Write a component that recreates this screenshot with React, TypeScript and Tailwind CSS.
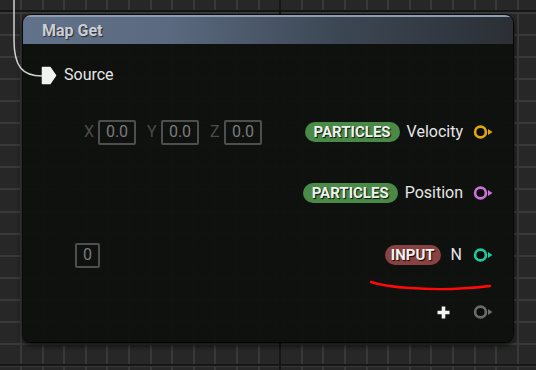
import React from 'react';

interface PinProps {
  color: string;
}

// output pin: ring + small arrow
const Pin: React.FC<PinProps> = ({ color }) => (
  <svg width="22" height="16" viewBox="0 0 22 16" className="shrink-0">
    <circle cx="7.5" cy="8" r="5.4" fill="#0b0c0b" stroke={color} strokeWidth="2.7" />
    <path d="M15 5 L19.5 8 L15 11 Z" fill={color} />
  </svg>
);

const Badge: React.FC<{ label: string; tone: 'green' | 'red' }> = ({ label, tone }) => (
  <span
    className={`h-[20px] rounded-full flex items-center text-[15px] font-bold text-[#eef2ee] [text-shadow:1px_1px_1px_rgba(0,0,0,0.9)] ${
      tone === 'green' ? 'px-[9px] bg-[#4a8a47]' : 'px-[6px] bg-[#8a4141]'
    }`}
  >
    {label}
  </span>
);

const VecField: React.FC<{ axis: string }> = ({ axis }) => (
  <div className="flex items-center">
    <span className="w-[14px] text-[#4b4b4b] text-[16px]">{axis}</span>
    <span className="w-[38px] h-[25px] border-2 border-[#4e4e4e] rounded-[2px] flex items-center justify-center text-[16px] text-[#7c7c7c]">
      0.0
    </span>
  </div>
);

// background grid of the graph canvas
const cols = Array.from({ length: 25 }, (_, i) => Math.round(20 + i * 21.6));
const rows = Array.from({ length: 17 }, (_, i) => Math.round(12 + i * 22.06));

const Grid = () => (
  <div className="absolute inset-0">
    <svg width="536" height="370" shapeRendering="crispEdges">
      {cols.map((x) => (
        <rect key={'c' + x} x={x} y="0" width="1.5" height="370" fill="#393939" />
      ))}
      {rows.map((y) => (
        <rect key={'r' + y} x="0" y={y} width="536" height="1.5" fill="#393939" />
      ))}
      <rect x="279" y="0" width="2" height="370" fill="#161616" />
      <rect x="0" y="10" width="536" height="2" fill="#161616" />
      <rect x="0" y="364" width="536" height="2" fill="#161616" />
    </svg>
  </div>
);

export default function App() {
  return (
    <div className="relative w-[536px] h-[370px] overflow-hidden bg-[#272727] font-['Roboto','Liberation_Sans',sans-serif]">
      <Grid />
      <div className="relative pt-[15px] pl-[23px]">
        {/* Map Get node */}
        <div className="w-[490px] h-[327px] rounded-[8px] overflow-hidden flex flex-col bg-[#0e100e]/[0.95] shadow-[0_3px_6px_rgba(0,0,0,0.8)] ring-1 ring-black/70">
          <div className="h-[29px] shrink-0 flex items-center pl-[19px] border-t-2 border-[#8d9db2] bg-[linear-gradient(to_right,#62728a_0%,#5a697f_30%,#3c4653_65%,#2b2f35_100%)]">
            <span className="text-[16px] font-bold text-[#c9ced6] [text-shadow:1px_1px_1px_rgba(0,0,0,0.6)]">
              Map Get
            </span>
          </div>

          <div className="flex flex-col pl-[18px] pr-[18px]">
            {/* Source */}
            <div className="mt-[18px] h-[26px] flex items-center">
              <svg width="16" height="19" viewBox="0 0 16 19" className="shrink-0">
                <path d="M1.5 1.5 H9 L14.5 9.5 L9 17.5 H1.5 Z" fill="#f2f2f2" stroke="#f2f2f2" strokeWidth="1.5" strokeLinejoin="round" />
              </svg>
              <span className="ml-[7px] text-[16px] text-[#e6e6e6]">Source</span>
            </div>

            {/* Velocity */}
            <div className="mt-[31px] h-[26px] flex items-center">
              <div className="ml-[43px] flex items-center gap-[11px]">
                <VecField axis="X" />
                <VecField axis="Y" />
                <VecField axis="Z" />
              </div>
              <div className="ml-auto flex items-center">
                <Badge label="PARTICLES" tone="green" />
                <span className="ml-[7px] mr-[10px] text-[16px] text-[#e6e6e6]">Velocity</span>
                <Pin color="#dea511" />
              </div>
            </div>

            {/* Position */}
            <div className="mt-[35px] h-[26px] flex items-center justify-end">
              <Badge label="PARTICLES" tone="green" />
              <span className="ml-[7px] mr-[10px] text-[16px] text-[#e6e6e6]">Position</span>
              <Pin color="#c873d6" />
            </div>

            {/* N */}
            <div className="mt-[36px] h-[26px] flex items-center">
              <span className="ml-[34px] w-[25px] h-[25px] border-2 border-[#4e4e4e] rounded-[2px] flex items-center justify-center text-[16px] text-[#7c7c7c]">
                0
              </span>
              <div className="ml-auto flex items-center">
                <Badge label="INPUT" tone="red" />
                <span className="ml-[10px] mr-[11px] text-[16px] text-[#e6e6e6]">N</span>
                <Pin color="#1fc9a0" />
              </div>
            </div>

            {/* add pin */}
            <div className="mt-[31px] h-[26px] flex items-center justify-end">
              <svg width="15" height="15" viewBox="0 0 15 15" className="mr-[22px]">
                <path d="M7.5 1.5 V13.5 M1.5 7.5 H13.5" stroke="#f4f4f4" strokeWidth="3.6" />
              </svg>
              <Pin color="#6b6b6b" />
            </div>
          </div>
        </div>
      </div>

      {/* incoming wire + red annotation */}
      <svg className="absolute left-0 top-0 pointer-events-none" width="536" height="370">
        <path d="M14 0 L14 40 C14 66 22 76 42 76" fill="none" stroke="#cfcfcf" strokeWidth="1.5" />
        <path d="M371 282 C380 285 392 287 410 288 C435 290 465 289 490 286" fill="none" stroke="#ff0a0a" strokeWidth="2.4" strokeLinecap="round" />
      </svg>
    </div>
  );
}
